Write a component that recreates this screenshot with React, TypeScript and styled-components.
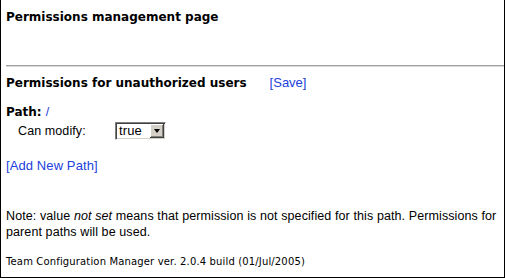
import React from "react";
import styled, { createGlobalStyle } from "styled-components";

const GlobalStyle = createGlobalStyle`
  html, body {
    margin: 0;
    padding: 0;
    background: #fff;
  }
  body {
    font-family: "Liberation Sans", Arial, sans-serif;
    font-size: 12.5px;
    letter-spacing: 0.1px;
    color: #000;
  }
`;

function App() {
  return (
    <>
      <GlobalStyle />
      <Frame>
        <PageTitle>Permissions management page</PageTitle>
        <Rule />
        <SectionHead>
          <span>Permissions for unauthorized users</span>
          <Link href="#">[Save]</Link>
        </SectionHead>

        <PathBlock>
          <PathLabel>
            Path: <Link href="#">/</Link>
          </PathLabel>
          <FieldRow>
            <FieldLabel>Can modify:</FieldLabel>
            <FakeSelect>
              <SelectValue>true</SelectValue>
              <SelectButton>
                <Arrow />
              </SelectButton>
            </FakeSelect>
          </FieldRow>
        </PathBlock>

        <AddLine>
          <Link href="#">[Add New Path]</Link>
        </AddLine>

        <Note>
          Note: value <em>not set</em> means that permission is not specified for this path.
          Permissions for parent paths will be used.
        </Note>

        <Footer>Team Configuration Manager ver. 2.0.4 build (01/Jul/2005)</Footer>
      </Frame>
    </>
  );
}

export default App;

const Frame = styled.div`
  width: 505px;
  height: 278px;
  box-sizing: border-box;
  border-left: 1px solid #000;
  border-right: 1px solid #000;
  border-bottom: 1px solid #000;
  padding: 0 0 0 5px;
  overflow: hidden;
`;

const PageTitle = styled.h1`
  margin: 0;
  padding-top: 9px;
  height: 54px;
  box-sizing: border-box;
  font-family: "DejaVu Sans", Verdana, sans-serif;
  font-size: 12px;
  letter-spacing: 0;
  font-weight: bold;
  line-height: 16px;
`;

const Rule = styled.div`
  margin: 11px 0 0 0;
  height: 1px;
  border-top: 1px solid #a0a0a0;
  background: #d8d8d8;
`;

const SectionHead = styled.h2`
  margin: 8px 0 0 0;
  display: flex;
  gap: 23px;
  font-family: "DejaVu Sans", Verdana, sans-serif;
  font-size: 12px;
  letter-spacing: 0;
  font-weight: bold;
  line-height: 16px;
  a {
    font-family: "Liberation Sans", Arial, sans-serif;
    font-size: 13px;
    font-weight: normal;
  }
`;

const Link = styled.a`
  color: #2240dc;
  text-decoration: none;
`;

const PathBlock = styled.div`
  margin-top: 14px;
`;

const PathLabel = styled.div`
  font-family: "DejaVu Sans", Verdana, sans-serif;
  font-size: 12px;
  letter-spacing: 0;
  font-weight: bold;
  line-height: 14px;
  a {
    font-family: "Liberation Sans", Arial, sans-serif;
    font-size: 12.5px;
    font-weight: normal;
  }
`;

const FieldRow = styled.div`
  display: flex;
  align-items: center;
  padding-left: 12px;
  margin-top: 3px;
`;

const FieldLabel = styled.span`
  width: 97px;
  line-height: 14px;
`;

const FakeSelect = styled.div`
  display: flex;
  width: 51px;
  height: 18px;
  box-sizing: border-box;
  border-top: 1px solid #808080;
  border-left: 1px solid #808080;
  border-right: 1px solid #fff;
  border-bottom: 1px solid #fff;
  box-shadow: inset 1px 1px 0 #404040, inset -1px -1px 0 #d4d0c8;
  background: #fff;
`;

const SelectValue = styled.span`
  flex: 1;
  padding: 1px 0 0 3px;
  font-size: 13px;
  line-height: 14px;
`;

const SelectButton = styled.span`
  width: 14px;
  margin: 1px 1px 1px 0;
  display: flex;
  align-items: center;
  justify-content: center;
  background: #d4d0c8;
  box-shadow: inset -1px -1px 0 #404040, inset 1px 1px 0 #fff, inset -2px -2px 0 #808080;
`;

const Arrow = styled.span`
  width: 0;
  height: 0;
  border-left: 3.5px solid transparent;
  border-right: 3.5px solid transparent;
  border-top: 4px solid #000;
`;

const AddLine = styled.div`
  margin-top: 19px;
  line-height: 14px;
  font-size: 13px;
`;

const Note = styled.p`
  margin: 35px 0 0 0;
  padding-right: 4px;
  line-height: 16px;
`;

const Footer = styled.div`
  margin-top: 16px;
  font-family: "DejaVu Sans", Verdana, sans-serif;
  font-size: 10px;
  letter-spacing: 0.15px;
  line-height: 12px;
`;
